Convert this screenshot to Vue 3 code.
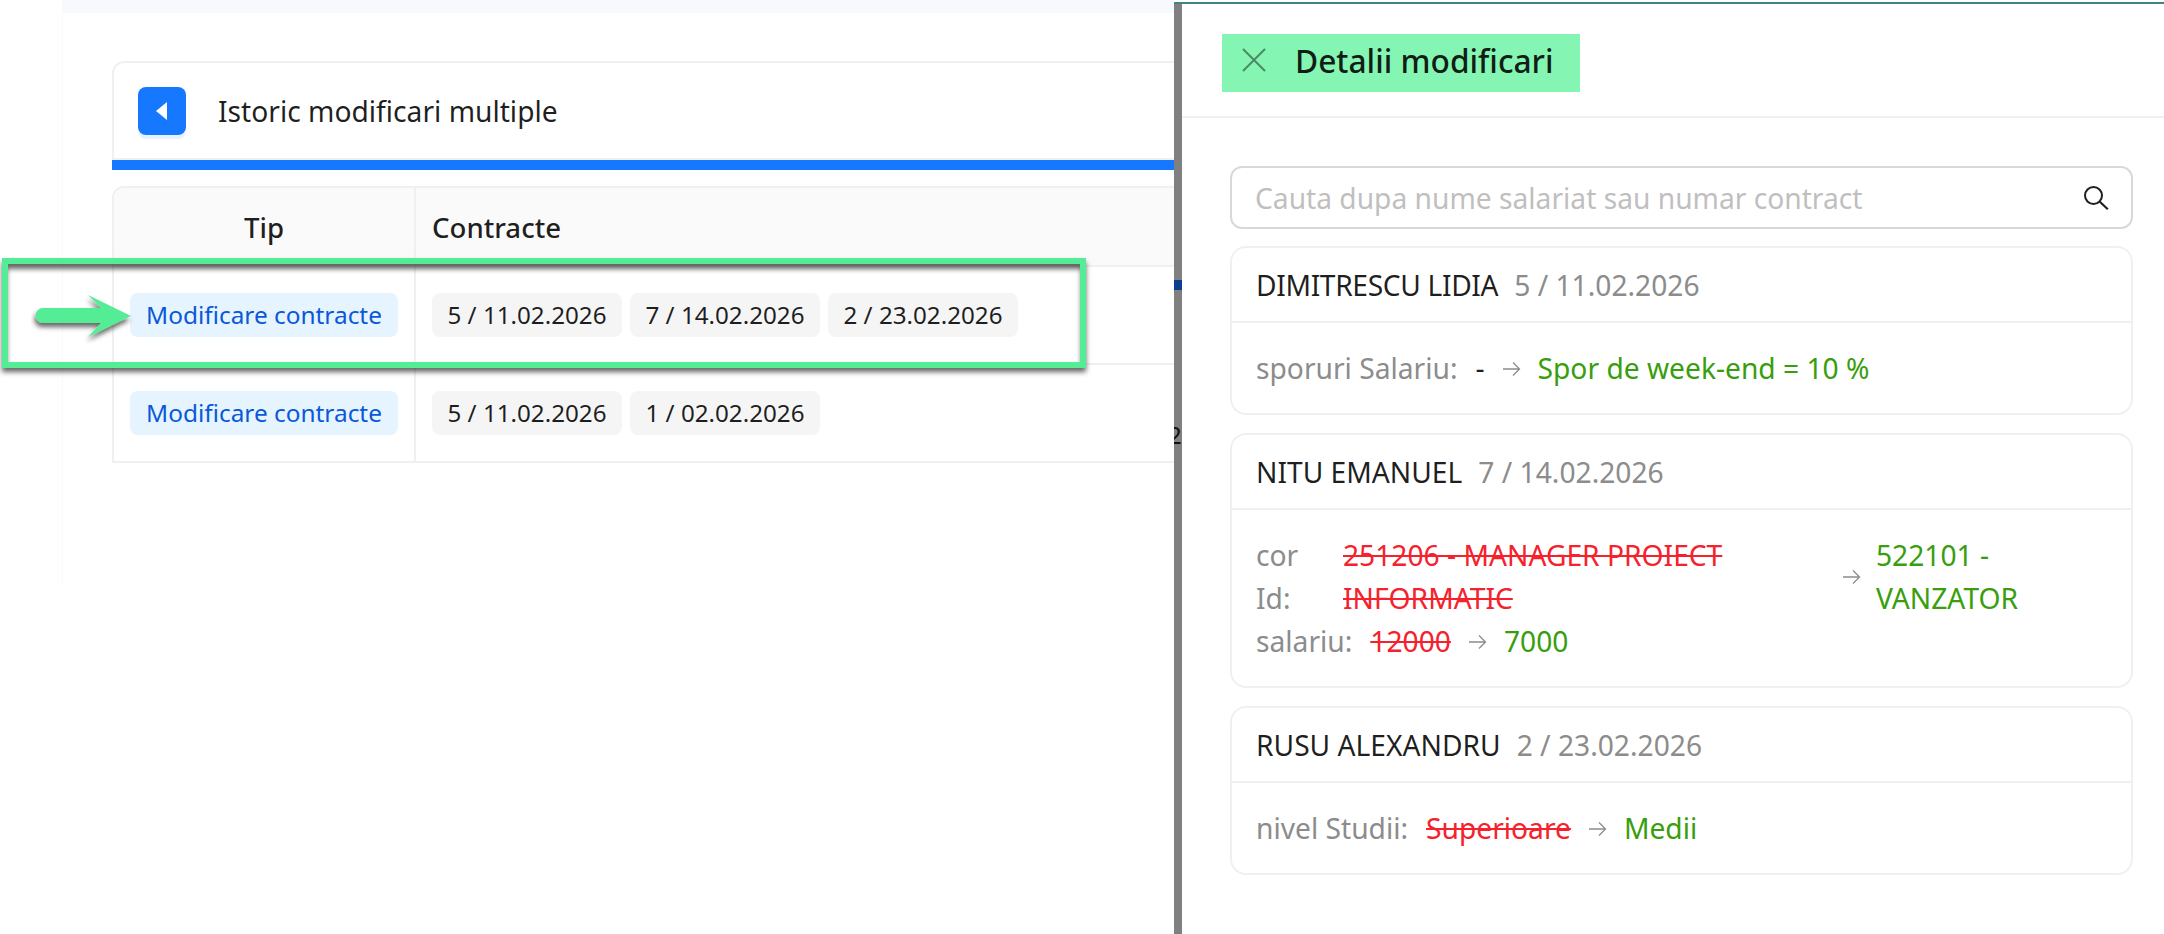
<script setup>
const dates1 = ['5 / 11.02.2026', '7 / 14.02.2026', '2 / 23.02.2026']
const dates2 = ['5 / 11.02.2026', '1 / 02.02.2026']
</script>

<template>
  <div class="root">
    <main class="main">
      <div class="strip"></div>
      <div class="content">
        <div class="head-card">
          <button class="back">
            <svg width="14" height="20" viewBox="0 0 14 20"><path d="M12 1v18L1 10z" fill="#fff" /></svg>
          </button>
          <span class="head-title">Istoric modificari multiple</span>
        </div>
        <div class="blue-bar"></div>
        <div class="table">
          <div class="row row-head">
            <div class="c1 center">Tip</div>
            <div class="c2">Contracte</div>
          </div>
          <div class="row row-body">
            <div class="c1"><span class="tag-blue">Modificare contracte</span></div>
            <div class="c2 tags"><span v-for="d in dates1" :key="d" class="tag">{{ d }}</span></div>
          </div>
          <div class="row row-body">
            <div class="c1"><span class="tag-blue">Modificare contracte</span></div>
            <div class="c2 tags"><span v-for="d in dates2" :key="d" class="tag">{{ d }}</span></div>
          </div>
        </div>
      </div>
    </main>

    <aside class="drawer">
      <div class="mask">
        <i class="mask-blue"></i>
        <span class="mask-two">2</span>
      </div>
      <div class="panel">
        <header class="panel-head">
          <div class="highlight">
            <svg class="close" width="24" height="24" viewBox="0 0 24 24"><path d="M1 1l22 22M23 1L1 23" stroke="#4a8a66" stroke-width="2" fill="none" /></svg>
            <span class="panel-title">Detalii modificari</span>
          </div>
        </header>
        <div class="panel-body">
          <div class="search">
            <span class="placeholder">Cauta dupa nume salariat sau numar contract</span>
            <svg width="26" height="26" viewBox="0 0 26 26"><circle cx="10.5" cy="10.5" r="8.5" stroke="#1f1f1f" stroke-width="2" fill="none" /><path d="M16.8 16.8l8 7.5" stroke="#1f1f1f" stroke-width="2.2" fill="none" /></svg>
          </div>

          <section class="card">
            <div class="card-head"><b class="tight">DIMITRESCU LIDIA</b><span>5 / 11.02.2026</span></div>
            <div class="card-body">
              <div class="line">
                <span class="lbl">sporuri Salariu:</span>
                <span class="dash">-</span>
                <svg class="arrow" width="18" height="16" viewBox="0 0 18 16"><path d="M0 8h16.5M10 1.5L16.5 8 10 14.5" stroke="#8c8c8c" stroke-width="1.3" fill="none" /></svg>
                <span class="new">Spor de week-end = 10 %</span>
              </div>
            </div>
          </section>

          <section class="card">
            <div class="card-head"><b>NITU EMANUEL</b><span>7 / 14.02.2026</span></div>
            <div class="card-body">
              <div class="line wrap-line">
                <span class="lbl w-lbl">cor Id:</span>
                <span class="old w-old">251206 - MANAGER PROIECT INFORMATIC</span>
                <svg class="arrow w-arrow" width="18" height="16" viewBox="0 0 18 16"><path d="M0 8h16.5M10 1.5L16.5 8 10 14.5" stroke="#8c8c8c" stroke-width="1.3" fill="none" /></svg>
                <span class="new w-new">522101 - VANZATOR</span>
              </div>
              <div class="line">
                <span class="lbl">salariu:</span>
                <span class="old">12000</span>
                <svg class="arrow" width="18" height="16" viewBox="0 0 18 16"><path d="M0 8h16.5M10 1.5L16.5 8 10 14.5" stroke="#8c8c8c" stroke-width="1.3" fill="none" /></svg>
                <span class="new">7000</span>
              </div>
            </div>
          </section>

          <section class="card">
            <div class="card-head"><b>RUSU ALEXANDRU</b><span>2 / 23.02.2026</span></div>
            <div class="card-body">
              <div class="line">
                <span class="lbl">nivel Studii:</span>
                <span class="old">Superioare</span>
                <svg class="arrow" width="18" height="16" viewBox="0 0 18 16"><path d="M0 8h16.5M10 1.5L16.5 8 10 14.5" stroke="#8c8c8c" stroke-width="1.3" fill="none" /></svg>
                <span class="new">Medii</span>
              </div>
            </div>
          </section>
        </div>
      </div>
    </aside>

    <div class="callout"></div>
    <svg class="callout-arrow" width="112" height="60" viewBox="0 0 112 60">
      <defs>
        <filter id="sh" x="-20%" y="-30%" width="140%" height="170%">
          <feDropShadow dx="-1" dy="4" stdDeviation="2.5" flood-color="#000" flood-opacity=".6" />
        </filter>
      </defs>
      <path d="M12 16H70L57 3l43 21-43 21 13-14H12a7.5 7.5 0 0 1 0-15z" fill="#55ec96" filter="url(#sh)" />
    </svg>
  </div>
</template>

<style>
html, body { margin: 0; background: #fff; }
</style>

<style scoped>
.root {
  position: relative;
  display: flex;
  width: 2164px;
  height: 934px;
  overflow: hidden;
  font-family: "Noto Sans", sans-serif;
  font-size: 28.2px;
  color: rgba(0, 0, 0, .88);
  background: #fff;
}
.main { flex: none; width: 1174px; overflow: hidden; }
.strip { height: 13px; margin-left: 62px; background: #f8f9fd; }
.content {
  box-sizing: border-box;
  height: 573px;
  margin-left: 62px;
  padding: 48px 0 0 49px;
  border-left: 1px solid #f8f9fd;
  width: 1300px;
}
.head-card {
  box-sizing: border-box;
  display: flex;
  align-items: center;
  height: 99px;
  padding: 0 0 0 24px;
  border: 2px solid #f0f0f0;
  border-radius: 12px 12px 0 0;
}
.back {
  display: flex;
  align-items: center;
  justify-content: center;
  width: 48px;
  height: 48px;
  padding: 0;
  border: 0;
  border-radius: 8px;
  background: #1677ff;
  box-shadow: 0 4px 0 #e6f4ff;
}
.head-title { margin-left: 32px; }
.blue-bar { height: 10px; background: #1677ff; }
.table { margin-top: 16px; border: 2px solid #f0f0f0; border-radius: 12px 12px 0 0; }
.row { display: flex; border-bottom: 2px solid #f0f0f0; }
.row:last-child { border-bottom: 0; }
.row-head { height: 77px; background: #fafafa; border-radius: 12px 12px 0 0; font-size: 27.6px; font-weight: 500; }
.row-body { height: 96px; font-size: 24.2px; }
.c1 { box-sizing: border-box; flex: none; width: 302px; padding-left: 16px; display: flex; align-items: center; border-right: 2px solid #f0f0f0; }
.c1.center { justify-content: center; padding-left: 0; }
.c2 { flex: 1; padding-left: 16px; display: flex; align-items: center; }
.tags { gap: 8px; }
.tag-blue {
  width: 268px;
  box-sizing: border-box;
  height: 44px;
  line-height: 44px;
  text-align: center;
  border-radius: 8px;
  background: #e6f4ff;
  color: #0958d9;
  font-size: 24.4px;
  white-space: nowrap;
}
.tag {
  width: 190px;
  height: 44px;
  line-height: 44px;
  text-align: center;
  border-radius: 8px;
  background: #f5f5f5;
  white-space: nowrap;
}
.drawer {
  flex: 1;
  display: flex;
  margin-top: 2px;
  border-top: 2px solid #3f8585;
  min-width: 0;
}
.mask { position: relative; flex: none; width: 8px; background: #808080; overflow: hidden; }
.mask-blue { position: absolute; left: 0; top: 276px; width: 8px; height: 10px; background: #0b3f8f; }
.mask-two { position: absolute; left: -6px; top: 416px; font-size: 24px; line-height: 30px; color: #111; }
.panel { flex: 1; min-width: 0; }
.panel-head { box-sizing: border-box; height: 114px; padding: 30px 0 0 40px; border-bottom: 2px solid #f0f0f0; }
.highlight {
  display: flex;
  align-items: center;
  box-sizing: border-box;
  width: 358px;
  height: 58px;
  padding-left: 20px;
  background: #85f5b3;
}
.close { flex: none; margin-top: -6px; }
.panel-title { margin-left: 29px; margin-top: -5px; font-size: 31.7px; font-weight: 500; white-space: nowrap; }
.panel-body { display: flex; flex-direction: column; padding: 48px 31px 0 48px; gap: 18px; }
.search {
  box-sizing: border-box;
  display: flex;
  align-items: center;
  justify-content: space-between;
  height: 63px;
  padding: 0 22px 0 23px;
  border: 2px solid #d9d9d9;
  border-radius: 12px;
}
.placeholder { color: #bfbfbf; white-space: nowrap; }
.card { border: 2px solid #f0f0f0; border-radius: 16px; margin-top: -1px; }
.card + .card { margin-top: 0; }
.card-head {
  box-sizing: border-box;
  display: flex;
  align-items: center;
  gap: 16px;
  height: 75px;
  padding: 0 24px;
  border-bottom: 2px solid #f0f0f0;
}
.card-head b { font-weight: 400; }
.card-head .tight { letter-spacing: -.35px; }
.card-head span { color: #8c8c8c; }
.card-body { padding: 24px 24px 23px; }
.line { display: flex; align-items: center; gap: 18px; line-height: 43px; }
.lbl { color: #8c8c8c; white-space: nowrap; }
.dash { color: rgba(0, 0, 0, .88); }
.old { color: #f5222d; text-decoration: line-through; white-space: nowrap; }
.new { color: #389e0d; white-space: nowrap; }
.arrow { flex: none; margin-right: -1px; }
.wrap-line { gap: 0; }
.w-lbl { flex: none; width: 60px; margin-right: 27px; white-space: normal; }
.w-old { flex: none; width: 400px; white-space: normal; }
.w-arrow { margin-left: 100px; margin-right: 0; }
.w-new { flex: none; width: 220px; white-space: normal; margin-left: 15px; }
.callout {
  position: absolute;
  left: 2px;
  top: 258px;
  box-sizing: border-box;
  width: 1084px;
  height: 110px;
  border: 6px solid #55ec96;
  box-shadow: 0 4px 5px rgba(0, 0, 0, .6), inset 0 6px 5px -1px rgba(0, 0, 0, .6);
}
.callout-arrow { position: absolute; left: 31px; top: 292px; }
</style>
